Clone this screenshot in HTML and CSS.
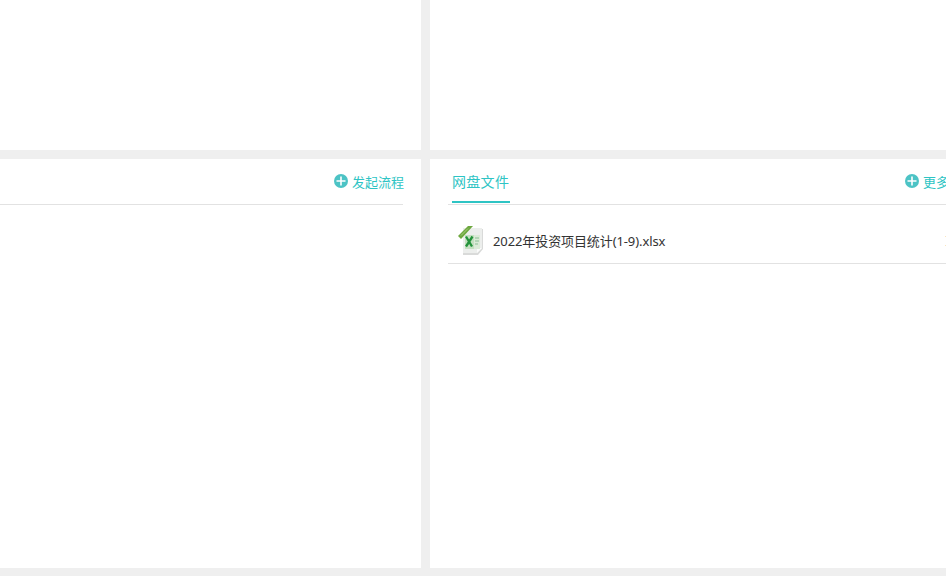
FILE: index.html
```html
<!DOCTYPE html>
<html lang="en">
<head>
    <meta charset="UTF-8">
    <meta name="viewport" content="width=device-width, initial-scale=1.0">
    <title>工作台</title>
    <link rel="stylesheet" href="styles.css">
</head>
<body>
    <div class="board">
        <div class="panel"></div>
        <div class="panel"></div>
        <div class="panel">
            <div class="panel-head head-left">
                <a class="head-action">
                    <svg class="plus" viewBox="0 0 14 14"><circle cx="7" cy="7" r="7"/><path d="M7 2.5v9M2.500 7h9"/></svg>
                    <span>发起流程</span>
                </a>
            </div>
        </div>
        <div class="panel">
            <div class="panel-head head-right">
                <span class="tab">网盘文件</span>
                <a class="head-action">
                    <svg class="plus" viewBox="0 0 14 14"><circle cx="7" cy="7" r="7"/><path d="M7 2.5v9M2.500 7h9"/></svg>
                    <span>更多</span>
                </a>
            </div>
            <div class="file-row">
                <svg class="file-icon" viewBox="0 0 26 29">
                    <path d="M5 3h20v20l-5 6H5z" fill="#d9dad9"/>
                    <path d="M5 2h19v20l-5 5H5z" fill="#eceeec"/>
                    <path d="M24 22l-5 5v-5z" fill="#fbfbfb"/>
                    <rect x="7" y="9" width="15" height="14" fill="#dcebd8"/>
                    <rect x="7" y="9" width="9" height="14" fill="#c4e0c0"/>
                    <path d="M8 10.500l6 10M14.500 10.500l-6.500 10" stroke="#23923a" stroke-width="2.300" fill="none"/>
                    <path d="M17 12h4M17 15h4M17 18h3" stroke="#8cbf94" stroke-width="1.200" fill="none"/>
                    <path d="M0 10 10 0h5L3 13z" fill="#6ea83f"/>
                    <path d="M3 9.500 10 2.500" stroke="#a5cc7c" stroke-width="1" fill="none"/>
                </svg>
                <span class="file-name">2022年投资项目统计(1-9).xlsx</span>
                <span class="file-date">I</span>
            </div>
        </div>
    </div>
</body>
</html>
```

FILE: styles.css
```css
html, body {
    height: 100%;
}
body {
    margin: 0;
    background: #efefef;
    overflow: hidden;
    font-family: "Noto Sans", "Noto Sans CJK SC", sans-serif;
    font-size: 13px;
}
.board {
    display: grid;
    grid-template-columns: 421px 536px;
    grid-template-rows: 150px 409px;
    gap: 9px;
}
.panel {
    background: #fff;
    min-width: 0;
    overflow: hidden;
}
.panel-head {
    display: flex;
    align-items: flex-start;
    justify-content: space-between;
    height: 45px;
    border-bottom: 1px solid #e2e2e2;
}
.head-left {
    justify-content: flex-end;
    margin-right: 18px;
}
.head-right {
    margin: 0 18px;
}
.tab {
    margin-left: 4px;
    padding-top: 13px;
    width: 58px;
    height: 29px;
    color: #2ec4c4;
    border-bottom: 2px solid #2ec4c4;
    font-size: 14px;
    letter-spacing: 0.3px;
    line-height: 20px;
}
.head-action {
    display: flex;
    align-items: center;
    gap: 4px;
    margin-top: 15px;
    margin-right: -1px;
    height: 14px;
    color: #2ec4c4;
    white-space: nowrap;
}
.plus {
    width: 14px;
    height: 14px;
    flex: none;
}
.plus circle {
    fill: #4cc3c5;
}
.plus path {
    stroke: #fff;
    stroke-width: 1.6;
    fill: none;
}
.file-row {
    display: flex;
    align-items: center;
    height: 46px;
    padding-top: 12px;
    margin-left: 18px;
    border-bottom: 1px solid #e2e2e2;
}
.file-icon {
    width: 26px;
    height: 29px;
    margin-left: 10px;
    flex: none;
}
.file-name {
    margin-left: 9px;
    color: #333;
    letter-spacing: -0.1px;
}
.file-date {
    margin-left: 280px;
    color: #777;
    font-size: 14px;
}
```
